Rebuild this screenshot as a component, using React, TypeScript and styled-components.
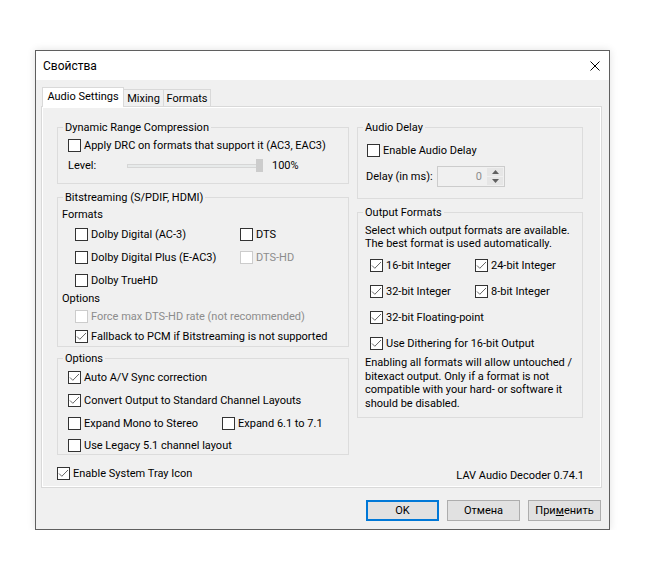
import styled, { createGlobalStyle } from "styled-components"
import { ReactNode } from "react"

const GlobalStyle = createGlobalStyle`
  html, body {
    margin: 0;
    padding: 0;
    background: #ffffff;
  }
  body {
    font-family: Roboto, "Liberation Sans", Arial, sans-serif;
    font-size: 11px;
    color: #000;
  }
  * {
    box-sizing: border-box;
  }
`

const Page = styled.div`
  padding: 50px 0 0 35px;
`

const Window = styled.div`
  width: 575px;
  height: 480px;
  border: 1px solid #5f5f5f;
  background: #f0f0f0;
  display: flex;
  flex-direction: column;
  box-shadow: 0 0 8px rgba(0, 0, 0, 0.12);
`

const TitleBar = styled.div`
  height: 29px;
  flex-shrink: 0;
  background: #ffffff;
  display: flex;
  align-items: center;
  justify-content: space-between;
  padding-left: 7px;
  font-size: 12px;
`

const CloseButton = styled.div`
  width: 28px;
  height: 29px;
  display: flex;
  align-items: center;
  justify-content: center;
`

const Body = styled.div`
  flex: 1;
  display: flex;
  flex-direction: column;
  padding: 7px 7px 0 5px;
`

const TabStrip = styled.div`
  height: 19px;
  display: flex;
  align-items: flex-end;
  padding-left: 1px;
`

const Tab = styled.div<{ $active?: boolean; $w: number }>`
  width: ${p => p.$w}px;
  height: ${p => (p.$active ? 20 : 17)}px;
  margin-bottom: ${p => (p.$active ? -1 : 0)}px;
  border: 1px solid #d9d9d9;
  border-bottom: none;
  border-left: ${p => (p.$active ? "1px solid #d9d9d9" : "none")};
  background: ${p => (p.$active ? "#ffffff" : "#f0f0f0")};
  display: flex;
  align-items: center;
  justify-content: center;
  padding-bottom: ${p => (p.$active ? 2 : 0)}px;
  position: relative;
  z-index: 1;
`

const Panel = styled.div`
  height: 382px;
  border: 1px solid #d9d9d9;
  box-shadow: inset 0 0 0 1px #ffffff;
  display: flex;
  flex-direction: column;
  padding: 13px 17px 0 15px;
`

const Columns = styled.div`
  display: flex;
  gap: 8px;
  align-items: flex-start;
`

const Column = styled.div<{ $w: number }>`
  width: ${p => p.$w}px;
  display: flex;
  flex-direction: column;
`

const Group = styled.fieldset<{ $mt?: number; $pb?: number }>`
  margin: ${p => p.$mt ?? 0}px 0 0;
  padding: 0 0 ${p => p.$pb ?? 0}px;
  border: 1px solid #dcdcdc;
  min-width: 0;
`

const Legend = styled.legend`
  margin-left: 5px;
  padding: 0 2px;
  height: 15px;
  line-height: 15px;
`

const Row = styled.div<{ $mt?: number; $ml?: number; $h?: number }>`
  display: flex;
  align-items: center;
  height: ${p => p.$h ?? 16}px;
  margin-top: ${p => p.$mt ?? 0}px;
  padding-left: ${p => p.$ml ?? 0}px;
  white-space: nowrap;
`

const Label = styled.span<{ $w?: number }>`
  width: ${p => (p.$w ? `${p.$w}px` : "auto")};
  flex-shrink: 0;
`

const Note = styled.div<{ $mt?: number; $lh: number }>`
  margin-top: ${p => p.$mt ?? 0}px;
  padding-left: 7px;
  line-height: ${p => p.$lh}px;
  white-space: nowrap;
`

const CheckLabel = styled.label<{ $disabled?: boolean; $w?: number }>`
  display: inline-flex;
  align-items: center;
  gap: 3px;
  width: ${p => (p.$w ? `${p.$w}px` : "auto")};
  flex-shrink: 0;
  color: ${p => (p.$disabled ? "#8c8c8c" : "#000")};
`

const Box = styled.span<{ $disabled?: boolean }>`
  width: 13px;
  height: 13px;
  flex-shrink: 0;
  border: 1px solid ${p => (p.$disabled ? "#cccccc" : "#333333")};
  background: #ffffff;
  display: flex;
  align-items: center;
  justify-content: center;
`

const Slider = styled.div`
  position: relative;
  width: 136px;
  height: 16px;
  display: flex;
  align-items: center;
`

const Track = styled.div`
  flex: 1;
  height: 4px;
  margin-top: 2px;
  background: #e7eaea;
  border: 1px solid #d6d6d6;
`

const Thumb = styled.div`
  position: absolute;
  right: 0;
  top: 2px;
  width: 7px;
  height: 13px;
  background: #cccccc;
`

const Percent = styled.span`
  margin-left: 9px;
`

const Spin = styled.div`
  width: 68px;
  height: 21px;
  border: 1px solid #cccccc;
  background: #f0f0f0;
  display: flex;
`

const SpinValue = styled.div`
  flex: 1;
  text-align: right;
  padding-right: 5px;
  line-height: 19px;
  color: #8d8d8d;
`

const SpinButtons = styled.div`
  width: 17px;
  display: flex;
  flex-direction: column;
  padding: 1px 1px 1px 0;
  gap: 1px;
`

const SpinArrow = styled.div`
  flex: 1;
  background: #e6e6e6;
  display: flex;
  align-items: center;
  justify-content: center;
`

const BottomRow = styled.div`
  margin-top: 10px;
  height: 16px;
  display: flex;
  align-items: center;
  justify-content: space-between;
`

const Version = styled.span`
  padding-top: 4px;
`

const Footer = styled.div`
  margin-top: 12px;
  display: flex;
  justify-content: flex-end;
  gap: 8px;
  padding-right: 1px;
`

const Button = styled.button<{ $default?: boolean }>`
  width: 73px;
  height: 21px;
  padding: 0;
  font: inherit;
  color: #000;
  background: #e1e1e1;
  border: ${p => (p.$default ? "2px solid #0078d7" : "1px solid #adadad")};

  u {
    text-decoration: underline;
  }
`

type CheckProps = {
  children: ReactNode
  checked?: boolean
  disabled?: boolean
  w?: number
}

const Check = ({ children, checked, disabled, w }: CheckProps) => (
  <CheckLabel $disabled={disabled} $w={w}>
    <Box $disabled={disabled}>
      {checked && (
        <svg width="11" height="11" viewBox="0 0 11 11">
          <polyline points="1,5.5 3.8,8.3 10,2" fill="none" stroke="#555" strokeWidth="0.9" />
        </svg>
      )}
    </Box>
    {children}
  </CheckLabel>
)

const App = (): JSX.Element => {
  return (
    <Page>
      <GlobalStyle />
      <Window>
        <TitleBar>
          <span>Свойства</span>
          <CloseButton>
            <svg width="10" height="10" viewBox="0 0 10 10">
              <path d="M0.5 0.5 L9.5 9.5 M9.5 0.5 L0.5 9.5" stroke="#000" strokeWidth="1" />
            </svg>
          </CloseButton>
        </TitleBar>

        <Body>
          <TabStrip>
            <Tab $active $w={82}>Audio Settings</Tab>
            <Tab $w={40}>Mixing</Tab>
            <Tab $w={47}>Formats</Tab>
          </TabStrip>

          <Panel>
            <Columns>
              <Column $w={292}>
                <Group $pb={10}>
                  <Legend>Dynamic Range Compression</Legend>
                  <Row $mt={2} $ml={10}>
                    <Check>Apply DRC on formats that support it (AC3, EAC3)</Check>
                  </Row>
                  <Row $mt={4} $ml={10}>
                    <Label $w={59}>Level:</Label>
                    <Slider>
                      <Track />
                      <Thumb />
                    </Slider>
                    <Percent>100%</Percent>
                  </Row>
                </Group>

                <Group $mt={6} $pb={2}>
                  <Legend>Bitstreaming (S/PDIF, HDMI)</Legend>
                  <Row $mt={1} $ml={4}>Formats</Row>
                  <Row $mt={4} $ml={17}>
                    <Check w={165}>Dolby Digital (AC-3)</Check>
                    <Check>DTS</Check>
                  </Row>
                  <Row $mt={7} $ml={17}>
                    <Check w={165}>Dolby Digital Plus (E-AC3)</Check>
                    <Check disabled>DTS-HD</Check>
                  </Row>
                  <Row $mt={7} $ml={17}>
                    <Check>Dolby TrueHD</Check>
                  </Row>
                  <Row $mt={2} $ml={4}>Options</Row>
                  <Row $mt={2} $ml={17}>
                    <Check disabled>Force max DTS-HD rate (not recommended)</Check>
                  </Row>
                  <Row $mt={4} $ml={17}>
                    <Check checked>Fallback to PCM if Bitstreaming is not supported</Check>
                  </Row>
                </Group>

                <Group $mt={4} $pb={1}>
                  <Legend>Options</Legend>
                  <Row $mt={3} $ml={10}>
                    <Check checked>Auto A/V Sync correction</Check>
                  </Row>
                  <Row $mt={7} $ml={10}>
                    <Check checked>Convert Output to Standard Channel Layouts</Check>
                  </Row>
                  <Row $mt={7} $ml={10}>
                    <Check w={154}>Expand Mono to Stereo</Check>
                    <Check>Expand 6.1 to 7.1</Check>
                  </Row>
                  <Row $mt={6} $ml={10}>
                    <Check>Use Legacy 5.1 channel layout</Check>
                  </Row>
                </Group>
              </Column>

              <Column $w={226}>
                <Group $pb={11}>
                  <Legend>Audio Delay</Legend>
                  <Row $mt={7} $ml={9}>
                    <Check>Enable Audio Delay</Check>
                  </Row>
                  <Row $mt={8} $ml={8} $h={21}>
                    <Label $w={71}>Delay (in ms):</Label>
                    <Spin>
                      <SpinValue>0</SpinValue>
                      <SpinButtons>
                        <SpinArrow>
                          <svg width="7" height="4" viewBox="0 0 7 4">
                            <path d="M0 4 L3.5 0 L7 4 Z" fill="#606060" />
                          </svg>
                        </SpinArrow>
                        <SpinArrow>
                          <svg width="7" height="4" viewBox="0 0 7 4">
                            <path d="M0 0 L7 0 L3.5 4 Z" fill="#606060" />
                          </svg>
                        </SpinArrow>
                      </SpinButtons>
                    </Spin>
                  </Row>
                </Group>

                <Group $mt={6} $pb={7}>
                  <Legend>Output Formats</Legend>
                  <Note $mt={4} $lh={13}>
                    Select which output formats are available.<br />
                    The best format is used automatically.
                  </Note>
                  <Row $mt={7} $ml={12}>
                    <Check checked w={105}>16-bit Integer</Check>
                    <Check checked>24-bit Integer</Check>
                  </Row>
                  <Row $mt={10} $ml={12}>
                    <Check checked w={105}>32-bit Integer</Check>
                    <Check checked>8-bit Integer</Check>
                  </Row>
                  <Row $mt={10} $ml={12}>
                    <Check checked>32-bit Floating-point</Check>
                  </Row>
                  <Row $mt={10} $ml={12}>
                    <Check checked>Use Dithering for 16-bit Output</Check>
                  </Row>
                  <Note $mt={5} $lh={13.5}>
                    Enabling all formats will allow untouched /<br />
                    bitexact output. Only if a format is not<br />
                    compatible with your hard- or software it<br />
                    should be disabled.
                  </Note>
                </Group>
              </Column>
            </Columns>

            <BottomRow>
              <Check checked>Enable System Tray Icon</Check>
              <Version>LAV Audio Decoder 0.74.1</Version>
            </BottomRow>
          </Panel>

          <Footer>
            <Button $default>OK</Button>
            <Button>Отмена</Button>
            <Button>При<u>м</u>енить</Button>
          </Footer>
        </Body>
      </Window>
    </Page>
  )
}

export default App
